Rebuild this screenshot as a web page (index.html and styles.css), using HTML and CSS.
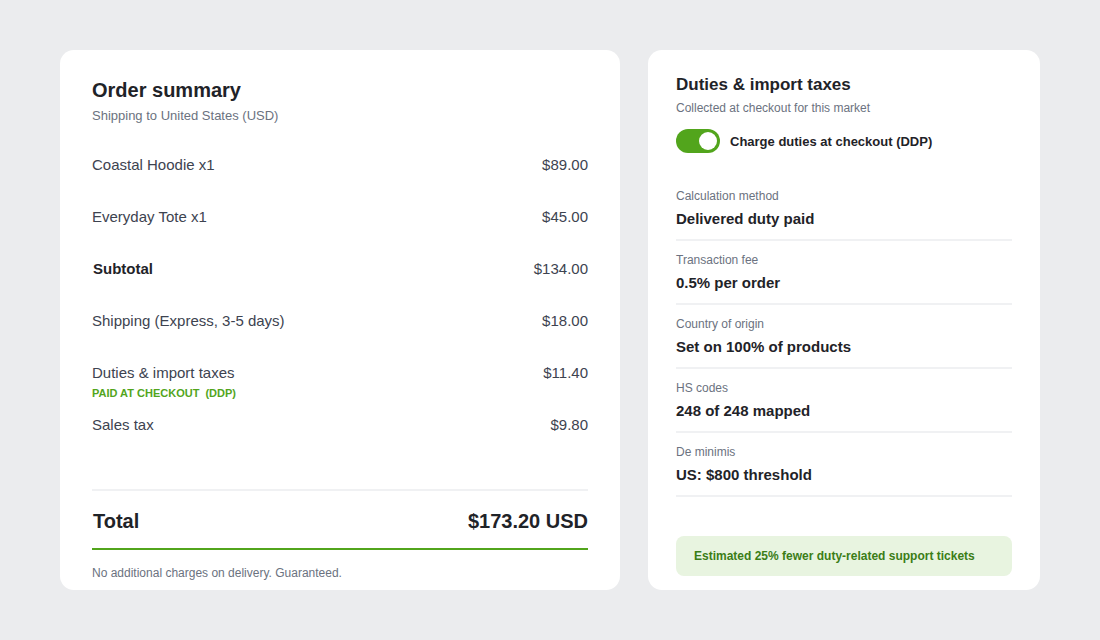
FILE: index.html
```html
<!DOCTYPE html>
<html lang="en">
<head>
    <meta charset="UTF-8">
    <meta name="viewport" content="width=device-width, initial-scale=1.0">
    <title>Checkout - Duties</title>
    <link rel="stylesheet" href="styles.css">
</head>
<body>
    <div class="layout">
        <!-- Resumen del pedido -->
        <section class="card summary">
            <h1 class="summary-title">Order summary</h1>
            <p class="summary-sub">Shipping to United States (USD)</p>

            <div class="lines">
                <div class="line">
                    <span>Coastal Hoodie x1</span>
                    <span>$89.00</span>
                </div>
                <div class="line">
                    <span>Everyday Tote x1</span>
                    <span>$45.00</span>
                </div>
                <div class="line line-strong">
                    <span>Subtotal</span>
                    <span class="amount">$134.00</span>
                </div>
                <div class="line">
                    <span>Shipping (Express, 3-5 days)</span>
                    <span>$18.00</span>
                </div>
                <div class="line">
                    <div>
                        <span>Duties &amp; import taxes</span>
                        <div class="line-tag">PAID AT CHECKOUT <span class="tag-extra">(DDP)</span></div>
                    </div>
                    <span>$11.40</span>
                </div>
                <div class="line">
                    <span>Sales tax</span>
                    <span>$9.80</span>
                </div>
            </div>

            <div class="total">
                <span>Total</span>
                <span>$173.20 USD</span>
            </div>
            <p class="summary-note">No additional charges on delivery. Guaranteed.</p>
        </section>

        <!-- Ajustes de aranceles -->
        <section class="card duties">
            <h2 class="duties-title">Duties &amp; import taxes</h2>
            <p class="duties-sub">Collected at checkout for this market</p>

            <label class="toggle-row">
                <span class="toggle on"><span class="toggle-knob"></span></span>
                <span class="toggle-label">Charge duties at checkout (DDP)</span>
            </label>

            <dl class="facts">
                <div class="fact">
                    <dt>Calculation method</dt>
                    <dd>Delivered duty paid</dd>
                </div>
                <div class="fact">
                    <dt>Transaction fee</dt>
                    <dd>0.5% per order</dd>
                </div>
                <div class="fact">
                    <dt>Country of origin</dt>
                    <dd>Set on 100% of products</dd>
                </div>
                <div class="fact">
                    <dt>HS codes</dt>
                    <dd>248 of 248 mapped</dd>
                </div>
                <div class="fact">
                    <dt>De minimis</dt>
                    <dd>US: $800 threshold</dd>
                </div>
            </dl>

            <div class="callout">Estimated 25% fewer duty-related support tickets</div>
        </section>
    </div>
</body>
</html>
```

FILE: styles.css
```css
/* Base */
body {
    font-family: "Liberation Sans", Arial, sans-serif;
    background-color: #ebecee;
    margin: 0;
    color: #1f2328;
}

.layout {
    display: flex;
    gap: 28px;
    padding: 50px 60px;
}

.card {
    background-color: #ffffff;
    border-radius: 14px;
    height: 540px;
    box-sizing: border-box;
    display: flex;
    flex-direction: column;
}

/* Order summary */
.summary {
    width: 560px;
    padding: 28px 32px 9px;
}

.summary-title {
    font-size: 20px;
    line-height: 24px;
    font-weight: 700;
    margin: 0;
}

.summary-sub {
    font-size: 13px;
    line-height: 16px;
    color: #6b7280;
    margin: 6px 0 0;
}

.lines {
    margin-top: 32px;
    display: flex;
    flex-direction: column;
}

.line {
    display: flex;
    justify-content: space-between;
    align-items: flex-start;
    height: 52px;
    font-size: 15px;
    line-height: 18px;
    color: #3d4350;
}

.line-strong span:first-child {
    font-weight: 700;
    color: #1f2328;
    padding-left: 1px;
}

.line-tag {
    font-size: 11px;
    line-height: 14px;
    font-weight: 700;
    color: #52a51c;
    margin-top: 4px;
}

.tag-extra {
    margin-left: 3px;
}

.total {
    margin-top: auto;
    display: flex;
    justify-content: space-between;
    font-size: 20px;
    line-height: 24px;
    font-weight: 700;
    color: #1f2328;
    border-top: 2px solid #f0f1f3;
    border-bottom: 2px solid #52a51c;
    padding: 18px 0 15px 1px;
}

.summary-note {
    font-size: 12px;
    line-height: 15px;
    color: #6b7280;
    margin: 16px 0 0;
}

/* Duties panel */
.duties {
    width: 392px;
    padding: 25px 28px 14px;
}

.duties-title {
    font-size: 17px;
    line-height: 20px;
    font-weight: 700;
    margin: 0;
}

.duties-sub {
    font-size: 12px;
    line-height: 15px;
    color: #6b7280;
    margin: 6px 0 0;
}

.toggle-row {
    display: flex;
    align-items: center;
    gap: 10px;
    margin-top: 13px;
}

.toggle {
    width: 44px;
    height: 24px;
    border-radius: 12px;
    background-color: #d1d5db;
    display: flex;
    align-items: center;
    padding: 0 3px;
    box-sizing: border-box;
}

.toggle.on {
    background-color: #52a51c;
    justify-content: flex-end;
}

.toggle-knob {
    width: 18px;
    height: 18px;
    border-radius: 50%;
    background-color: #ffffff;
}

.toggle-label {
    font-size: 13px;
    font-weight: 700;
    color: #1f2328;
}

.facts {
    margin: 24px 0 0;
}

.fact {
    padding: 12px 0 11px;
    border-bottom: 2px solid #f0f1f3;
}

.fact dt {
    font-size: 12px;
    line-height: 15px;
    color: #6b7280;
    margin-bottom: 6px;
}

.fact dd {
    margin: 0;
    font-size: 15px;
    line-height: 18px;
    font-weight: 700;
    color: #1f2328;
}

.callout {
    margin-top: auto;
    height: 40px;
    display: flex;
    align-items: center;
    padding: 0 18px;
    border-radius: 8px;
    background-color: #e8f4e0;
    color: #3b7d17;
    font-size: 12px;
    font-weight: 700;
}
```
